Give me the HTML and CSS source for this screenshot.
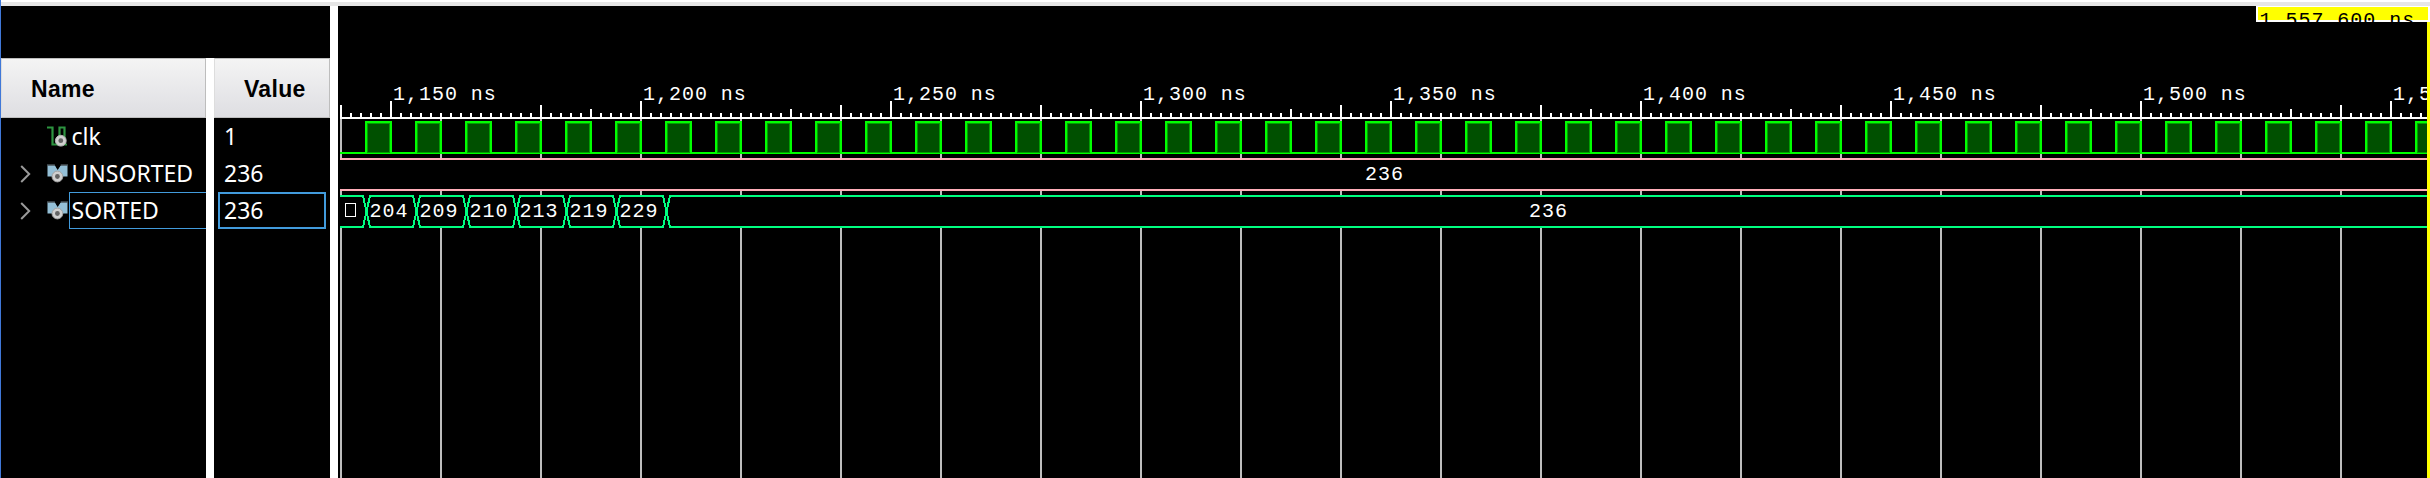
FILE: index.html
```html
<!DOCTYPE html>
<html lang="en">
<head>
<meta charset="utf-8">
<title>Waveform viewer</title>
<link rel="stylesheet" href="styles.css">
</head>
<body>
<svg class="defs" width="0" height="0" aria-hidden="true">
  <symbol id="bus-icon" viewBox="0 0 22 19">
    <path d="M.5 1H8L10.5 5.5L14 1H20.5V12.5H.5Z" fill="#94bfd6"/>
    <path d="M0 1H8M13.5 1H21" stroke="#4a5358" stroke-width="1.5"/>
    <path d="M7.5 0.5H14L10.7 6Z" fill="#000"/>
    <circle cx="10.4" cy="12.5" r="5.4" fill="#d0d0d0" stroke="#a2a2a2"/>
    <circle cx="10.4" cy="12.5" r="2.4" fill="#646464"/>
  </symbol>
  <symbol id="chevron" viewBox="0 0 12 20">
    <path d="M1.2 2L9.2 10L1.2 18" fill="none" stroke="#9a9a9a" stroke-width="2"/>
  </symbol>
</svg>
<div class="viewer">
  <section class="signals">
    <div class="signals-top"></div>
    <div class="columns">
      <div class="column names">
        <div class="heading">Name</div>
        <div class="row">
          <span class="twist"></span>
          <svg class="icon" width="22" height="22" viewBox="0 0 22 22">
            <path d="M0 1.5H5.5V18.5H12.5V1.5H17.5V18.5H20" fill="none" stroke="#2d9440" stroke-width="2.2"/>
            <circle cx="13.8" cy="14.7" r="5.4" fill="#d0d0d0" stroke="#b4b4b4"/>
            <circle cx="13.8" cy="14.7" r="2.4" fill="#646464"/>
          </svg>
          <span class="label">clk</span>
        </div>
        <div class="row">
          <svg class="twist" width="12" height="20"><use href="#chevron"/></svg>
          <svg class="icon" width="22" height="19"><use href="#bus-icon"/></svg>
          <span class="label">UNSORTED</span>
        </div>
        <div class="row">
          <svg class="twist" width="12" height="20"><use href="#chevron"/></svg>
          <svg class="icon" width="22" height="19"><use href="#bus-icon"/></svg>
          <span class="label selected">SORTED</span>
        </div>
      </div>
      <div class="column values">
        <div class="heading">Value</div>
        <div class="row"><span class="value">1</span></div>
        <div class="row"><span class="value">236</span></div>
        <div class="row"><span class="value selected">236</span></div>
      </div>
    </div>
  </section>
  <svg class="wave" width="2092" height="472" viewBox="338 6 2092 472">
    <defs>
      <pattern id="grid" x="340" y="0" width="100" height="478" patternUnits="userSpaceOnUse"><rect width="2" height="478" fill="#bebebe"/></pattern>
      <pattern id="minor" x="340" y="113" width="10" height="5" patternUnits="userSpaceOnUse"><rect width="2" height="5" fill="#fff"/></pattern>
      <pattern id="clock" x="340" y="121" width="50" height="33" patternUnits="userSpaceOnUse">
        <rect y="31" width="50" height="2" fill="#0f0"/>
        <rect x="25" width="25" height="33" fill="#0f0"/>
        <rect width="2" height="33" fill="#0f0"/>
        <rect x="27" y="2" width="23" height="30" fill="#00a000"/>
        <rect x="28" y="3" width="21" height="28" fill="#005000"/>
      </pattern>
    </defs>
    <g shape-rendering="crispEdges">
      <rect x="340" y="119" width="2087" height="359" fill="url(#grid)"/>
      <rect x="340" y="113" width="2087" height="5" fill="url(#minor)"/>
      <rect x="340" y="117" width="2087" height="2" fill="#fff"/>
      <path d="M391 101V118M641 101V118M891 101V118M1141 101V118M1391 101V118M1641 101V118M1891 101V118M2141 101V118M2391 101V118M341 105V118M541 105V118M841 105V118M1041 105V118M1341 105V118M1541 105V118M1841 105V118M2041 105V118M2341 105V118M591 109V118M791 109V118M1091 109V118M1291 109V118M1591 109V118M1791 109V118M2091 109V118M2291 109V118" stroke="#fff" stroke-width="2"/>
      <rect x="342" y="121" width="2085" height="33" fill="url(#clock)"/>
      <rect x="340" y="152" width="2" height="2" fill="#0f0"/>
      <rect x="340" y="158" width="2087" height="33" fill="#000"/>
      <path d="M340 159H2427M340 190H2427" stroke="#ffaeb9" stroke-width="2"/>
      <rect x="340" y="195" width="2087" height="33" fill="#000"/>
      <path fill="none" stroke="#00ff80" stroke-width="2" d="M340 196H363L370 227H413L420 196H463L470 227H513L520 196H563L570 227H613L620 196H663L670 227H2427M340 227H363L370 196H413L420 227H463L470 196H513L520 227H563L570 196H613L620 227H663L670 196H2427"/>
      <rect x="345.5" y="203.5" width="10" height="13" fill="none" stroke="#fff"/>
    </g>
    <g class="mono">
      <text x="393" y="100">1,150 ns</text>
      <text x="643" y="100">1,200 ns</text>
      <text x="893" y="100">1,250 ns</text>
      <text x="1143" y="100">1,300 ns</text>
      <text x="1393" y="100">1,350 ns</text>
      <text x="1643" y="100">1,400 ns</text>
      <text x="1893" y="100">1,450 ns</text>
      <text x="2143" y="100">1,500 ns</text>
      <text x="2393" y="100">1,5</text>
      <text x="1365" y="180">236</text>
      <text x="369.5" y="217">204</text>
      <text x="419.5" y="217">209</text>
      <text x="469.5" y="217">210</text>
      <text x="519.5" y="217">213</text>
      <text x="569.5" y="217">219</text>
      <text x="619.5" y="217">229</text>
      <text x="1529" y="217">236</text>
    </g>
    <rect x="2427" y="22" width="3" height="456" fill="#ff0"/>
    <svg x="2256" y="6" width="174" height="16">
      <rect width="174" height="16" fill="#fff"/>
      <rect x="2" y="1" width="170" height="13" fill="#ff0"/>
      <text class="marker" x="3.5" y="20">1,557.600 ns</text>
    </svg>
  </svg>
</div>
</body>
</html>
```

FILE: styles.css
```css
* { box-sizing: border-box; }
body {
  margin: 0;
  background: #fff;
  overflow: hidden;
}
.defs { display: block; }
.viewer {
  display: flex;
  gap: 8px;
  height: 478px;
  padding-top: 2px;
  border-left: 1px solid #4078d8;
  background: linear-gradient(#fff 2px, #e6e6e6 2px, #e6e6e6 6px, #fff 6px);
}
.signals {
  display: flex;
  flex-direction: column;
  width: 329px;
  padding-top: 4px;
  flex: none;
}
.signals-top {
  height: 52px;
  background: #000;
}
.columns {
  display: flex;
  flex: 1;
  gap: 8px;
}
.column {
  background: #000;
  color: #fff;
  font-family: "Noto Sans", sans-serif;
  font-size: 23px;
}
.names { width: 205px; }
.values { width: 116px; }
.heading {
  height: 60px;
  padding-left: 29px;
  border: 1px solid #bdbdbd;
  border-left-color: #ddd;
  background: linear-gradient(#f4f4f4, #dedee2);
  color: #000;
  font: bold 23px/60px "Liberation Sans", Arial, sans-serif;
  letter-spacing: .3px;
}
.row {
  display: flex;
  align-items: center;
  height: 37px;
}
.names .row { padding-left: 19px; }
.twist {
  flex: none;
  width: 12px;
}
.icon {
  flex: none;
  margin-left: 15px;
}
.label {
  flex: 1;
  height: 37px;
  padding-left: 1.5px;
  border: 1px solid transparent;
  line-height: 35px;
}
.label.selected {
  border: 1px solid #429bdc;
  border-right: 0;
}
.value {
  width: 108px;
  height: 37px;
  margin-left: 4px;
  padding-left: 4px;
  border: 2px solid transparent;
  line-height: 33px;
}
.value.selected { border-color: #429bdc; }
.wave {
  display: block;
  flex: none;
  margin-top: 4px;
  background: #000;
}
.mono, .marker {
  font-family: "Liberation Mono", "Courier New", monospace;
  font-size: 20px;
  letter-spacing: .97px;
  white-space: pre;
}
.mono { fill: #fff; }
.marker { fill: #000; }
```
